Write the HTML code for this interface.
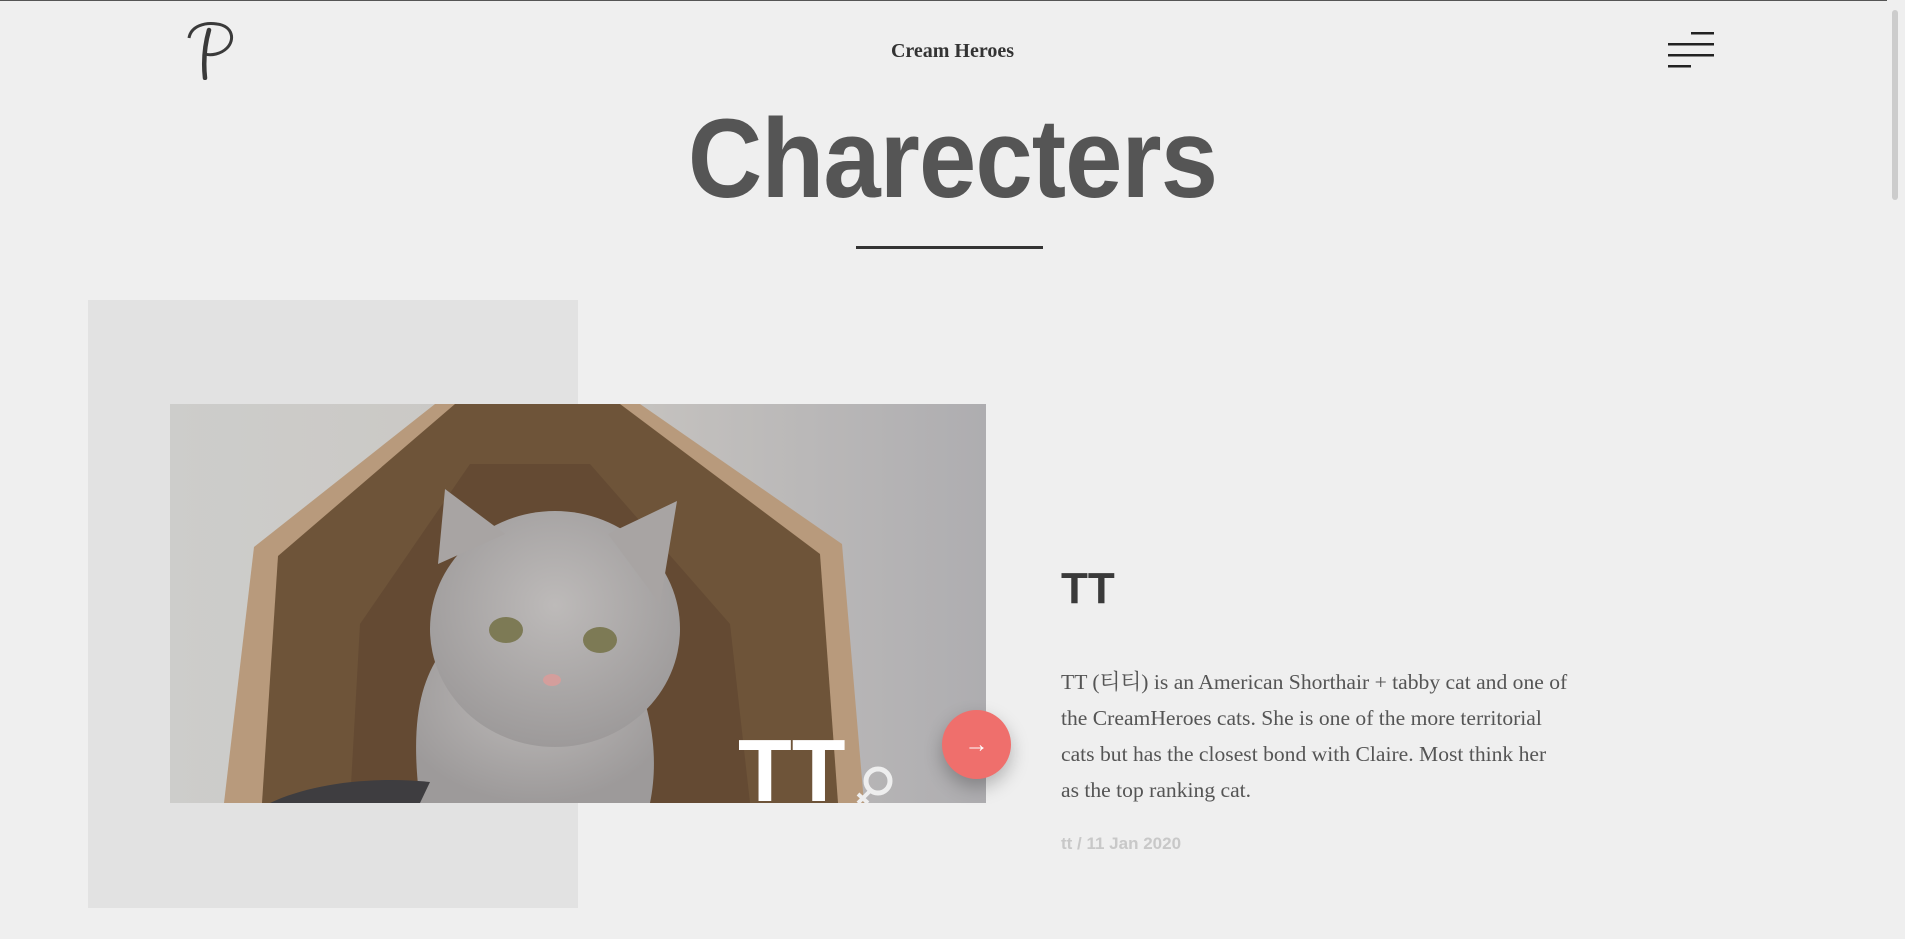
<!DOCTYPE html>
<html><head><meta charset="utf-8"><style>
html,body{margin:0;padding:0;background:#efefef;width:1905px;height:939px;overflow:hidden;position:relative;font-family:"Liberation Sans",sans-serif}
.topline{position:absolute;left:0;top:0;width:1905px;height:1px;background:#555}
.brand{position:absolute;left:0;width:1905px;top:40px;text-align:center;font:bold 20px "Liberation Serif",serif;color:#333}
h1{position:absolute;left:0;width:1905px;top:97px;margin:0;text-align:center;font:bold 112px/1.1 "Liberation Sans",sans-serif;color:#555;letter-spacing:-1px;transform:scaleX(0.92)}
.ul{position:absolute;left:856px;top:246px;width:187px;height:3px;background:#333}
.gbox{position:absolute;left:88px;top:300px;width:490px;height:608px;background:#e2e2e2}
.img{position:absolute;left:170px;top:404px;width:816px;height:399px;overflow:hidden}
.btn{position:absolute;left:942px;top:710px;width:69px;height:69px;border-radius:50%;background:#ef6f6c;box-shadow:0 8px 18px rgba(0,0,0,.25);color:#fff;text-align:center;line-height:69px;font-size:24px}
.tt{position:absolute;left:1061px;top:564px;font:bold 44px "Liberation Sans",sans-serif;color:#3a3a3a}
.p{position:absolute;left:1061px;top:664px;white-space:nowrap;font:21.6px/36px "Liberation Serif","Noto Serif CJK SC",serif;color:#555}
.date{position:absolute;left:1061px;top:834px;font:bold 17px "Liberation Sans",sans-serif;color:#c8c8c8}
.sb{position:absolute;right:0;top:0;width:18px;height:939px;background:#efefef}
.sb i{position:absolute;left:5px;top:10px;width:6px;height:190px;background:#ccc;border-radius:3px}
</style></head><body>
<div class="topline"></div>
<svg style="position:absolute;left:183px;top:20px" width="62" height="60" viewBox="0 0 62 60">
<path d="M6 18 C8 6 22 2 34 4 C50 6 52 20 44 28 C38 34 28 36 22 34" fill="none" stroke="#3a3a3a" stroke-width="3"/>
<path d="M26 10 C22 24 20 40 22 58" fill="none" stroke="#3a3a3a" stroke-width="4.5" stroke-linecap="round"/>
</svg>
<div class="brand">Cream Heroes</div>
<svg style="position:absolute;left:1668px;top:32px" width="47" height="40">
<rect x="23" y="0" width="23" height="2.5" fill="#222"/><rect x="0" y="11" width="46" height="2.5" fill="#222"/><rect x="0" y="22" width="46" height="2.5" fill="#222"/><rect x="0" y="33" width="23" height="2.5" fill="#222"/>
</svg>
<h1>Charecters</h1>
<div class="ul"></div>
<div class="gbox"></div>
<div class="img"><svg width="816" height="399" viewBox="0 0 816 399">
<defs><linearGradient id="bg" x1="0" x2="1"><stop offset="0" stop-color="#cdcdcb"/><stop offset=".5" stop-color="#c9c6c2"/><stop offset="1" stop-color="#aeadb0"/></linearGradient>
<radialGradient id="cat" cx=".5" cy=".4" r=".6"><stop offset="0" stop-color="#bdbab9"/><stop offset="1" stop-color="#9d9a9a"/></radialGradient></defs>
<rect width="816" height="399" fill="url(#bg)"/>
<polygon points="54,399 84,143 265,0 470,0 672,140 694,399" fill="#b89a7c"/>
<polygon points="92,399 108,152 285,0 450,0 650,150 668,399" fill="#6e5439"/>
<polygon points="180,399 190,220 300,60 420,60 560,220 580,399" fill="#5e4530" opacity=".6"/>
<path d="M250 399 C240 320 250 280 270 250 L300 220 L420 220 L460 260 C480 300 490 350 480 399Z" fill="url(#cat)"/>
<ellipse cx="385" cy="225" rx="125" ry="118" fill="url(#cat)"/>
<polygon points="268,160 275,85 335,130" fill="#a8a4a3"/>
<polygon points="438,130 507,97 490,200" fill="#a8a4a3"/>
<ellipse cx="336" cy="226" rx="17" ry="13" fill="#7d7a55"/><ellipse cx="430" cy="236" rx="17" ry="13" fill="#7d7a55"/>
<ellipse cx="382" cy="276" rx="9" ry="6" fill="#d49e9c"/>
<path d="M100 399 C140 380 200 372 260 378 L250 399Z" fill="#3e3d40"/>
<text x="568" y="397" font-family="Liberation Sans" font-weight="bold" font-size="88" fill="#fff">TT</text>
<circle cx="708" cy="377" r="12" fill="none" stroke="#eee" stroke-width="5"/>
<path d="M700 387 L688 399 M688 390 L698 399" stroke="#eee" stroke-width="4"/>
</svg></div>
<div class="btn">&#8594;</div>
<div class="tt">TT</div>
<div class="p">TT (티티) is an American Shorthair + tabby cat and one of<br>the CreamHeroes cats. She is one of the more territorial<br>cats but has the closest bond with Claire. Most think her<br>as the top ranking cat.</div>
<div class="date">tt / 11 Jan 2020</div>
<div class="sb"><i></i></div>
</body></html>
